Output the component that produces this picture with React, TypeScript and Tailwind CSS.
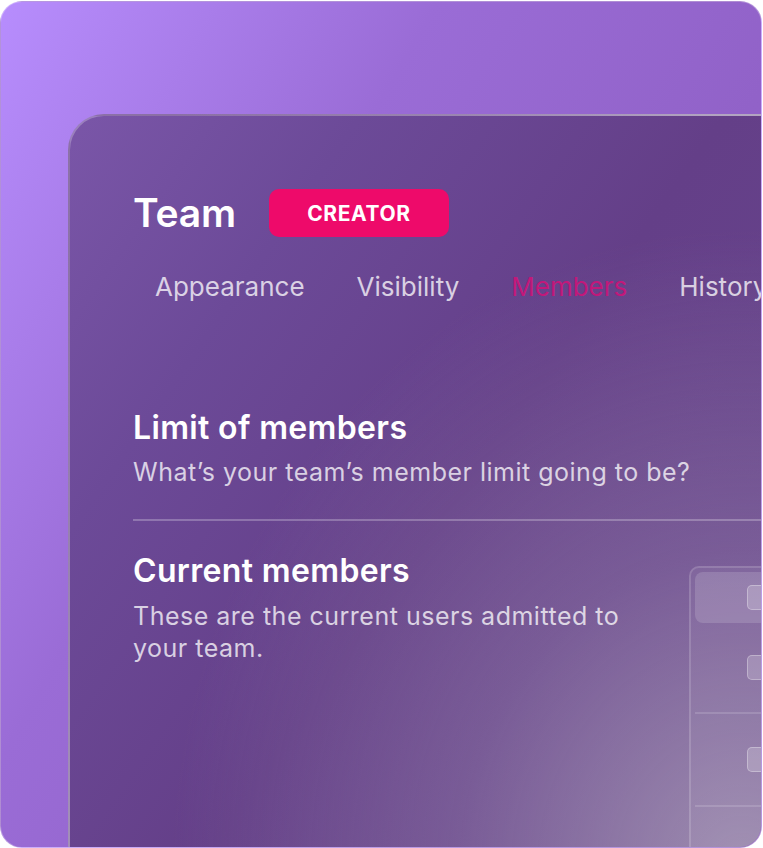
import React from "react";

export default function App() {
  const font = { fontFamily: "Inter, 'Noto Sans', sans-serif" };
  return (
    <div className="w-[763px] h-[848px] bg-white overflow-hidden pt-px" style={font}>
      <div className="relative w-[762px] h-[847px] rounded-[22px] overflow-hidden border border-white/30 bg-[linear-gradient(120deg,#b78dfd_0%,#9a6cd6_35%,#9162c8_65%,#8d5bbf_100%)]">
        <div className="ml-[67px] mt-[112px] w-[900px] h-[800px] rounded-tl-[36px] border-2 border-white/25 bg-[radial-gradient(ellipse_at_75%_95%,rgba(180,170,190,0.7)_0%,rgba(150,130,170,0.4)_30%,rgba(100,64,136,0)_60%),linear-gradient(125deg,#7a56a8_0%,#6c4a98_20%,#643f88_45%,#6a4a90_100%)] pl-[63px] pt-[73px]">
          <div className="flex items-center h-[48px]">
            <span className="text-[39px] leading-[48px] font-semibold text-white tracking-[-0.2px]">Team</span>
            <span className="ml-[33px] w-[180px] h-[48px] rounded-[10px] bg-[#ee0a6a] flex items-center justify-center text-white text-[21px] font-bold tracking-[0.6px] pt-px">
              CREATOR
            </span>
          </div>
          <div className="flex mt-[34px] ml-[22px] gap-[52px] text-[26px] leading-[32px] whitespace-nowrap">
            <span className="text-white/75">Appearance</span>
            <span className="text-white/75">Visibility</span>
            <span className="text-[#c2187a]">Members</span>
            <span className="text-white/75">History</span>
          </div>
          <div className="mt-[107px]">
            <div className="text-[32px] leading-[36px] font-semibold text-white tracking-[0.35px]">Limit of members</div>
            <div className="mt-[10px] text-[25px] leading-[32px] text-white/75 tracking-[0.5px]">What’s your team’s member limit going to be?</div>
          </div>
          <div className="mt-[31px] h-[2px] bg-white/25" />
          <div className="flex">
            <div className="w-[540px] shrink-0 pt-[32px]">
              <div className="text-[32px] leading-[36px] font-semibold text-white tracking-[0.35px]">Current members</div>
              <div className="mt-[11px] text-[25px] leading-[32px] text-white/75 tracking-[0.5px]">
                These are the current users admitted to your team.
              </div>
            </div>
            <div className="ml-[16px] mt-[45px] w-[300px] h-[400px] rounded-[10px] border-2 border-white/15 bg-white/5 p-[4px]">
              <div className="h-[51px] rounded-[8px] bg-white/15 flex items-center pl-[52px]">
                <div className="h-[25px] w-[120px] rounded-[5px] bg-white/20 border border-white/30" />
              </div>
              <div className="h-[91px] flex items-center pl-[52px] border-b-2 border-white/15">
                <div className="h-[25px] w-[120px] rounded-[5px] bg-white/20 border border-white/30" />
              </div>
              <div className="h-[93px] flex items-center pl-[52px] border-b-2 border-white/15">
                <div className="h-[25px] w-[120px] rounded-[5px] bg-white/20 border border-white/30" />
              </div>
            </div>
          </div>
        </div>
      </div>
    </div>
  );
}
